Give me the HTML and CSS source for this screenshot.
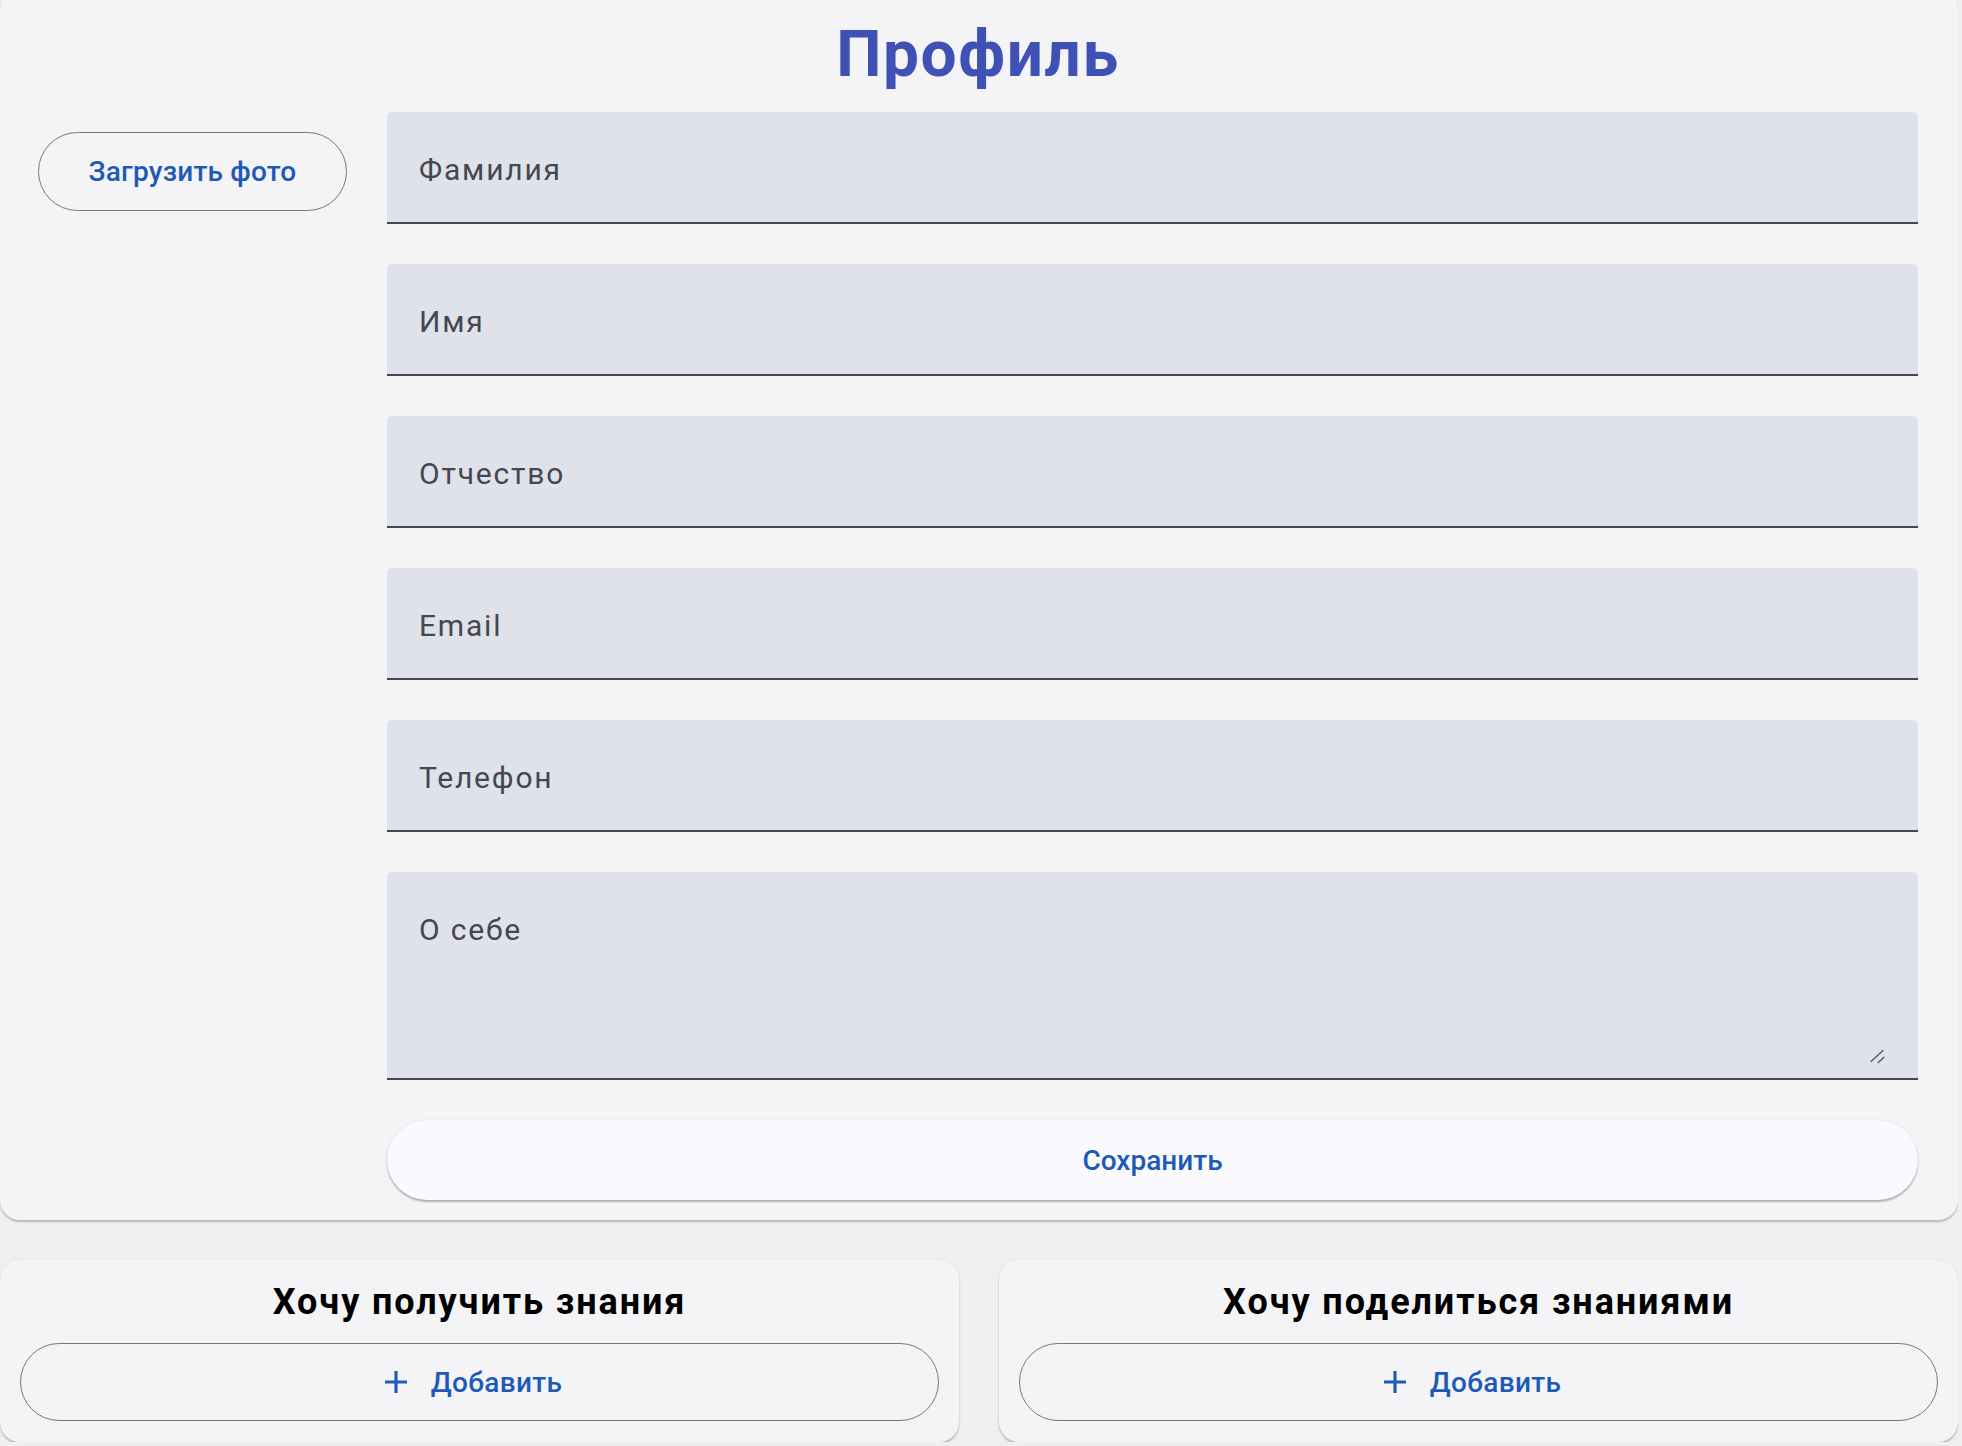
FILE: index.html
```html
<!DOCTYPE html>
<html lang="ru">
<head>
<meta charset="utf-8">
<title>Профиль</title>
<link rel="stylesheet" href="styles.css">
</head>
<body>
<div class="page">
  <section class="profile-card">
    <h1 class="title">Профиль</h1>
    <div class="profile-body">
      <div class="photo-col">
        <button class="btn-outline photo-btn" type="button">Загрузить фото</button>
      </div>
      <form class="fields">
        <div class="field"><span class="field-label">Фамилия</span></div>
        <div class="field"><span class="field-label">Имя</span></div>
        <div class="field"><span class="field-label">Отчество</span></div>
        <div class="field"><span class="field-label">Email</span></div>
        <div class="field"><span class="field-label">Телефон</span></div>
        <div class="field field-area">
          <span class="field-label">О себе</span>
          <svg class="grip" width="20" height="20" viewBox="0 0 20 20"><path d="M2.7 14.7 15.3 3.3M9.7 16 16.3 10" stroke="#55575d" stroke-width="1.4" fill="none"/></svg>
        </div>
        <button class="btn-save" type="button">Сохранить</button>
      </form>
    </div>
  </section>
  <div class="knowledge">
    <section class="k-card">
      <h2 class="k-title">Хочу получить знания</h2>
      <button class="btn-outline btn-add" type="button"><svg class="plus" width="22" height="22" viewBox="5 5 14 14"><path d="M19 13h-6v6h-2v-6H5v-2h6V5h2v6h6v2z" fill="currentColor"/></svg><span>Добавить</span></button>
    </section>
    <section class="k-card">
      <h2 class="k-title">Хочу поделиться знаниями</h2>
      <button class="btn-outline btn-add" type="button"><svg class="plus" width="22" height="22" viewBox="5 5 14 14"><path d="M19 13h-6v6h-2v-6H5v-2h6V5h2v6h6v2z" fill="currentColor"/></svg><span>Добавить</span></button>
    </section>
  </div>
</div>
</body>
</html>
```

FILE: styles.css
```css
* { box-sizing: border-box; }
html, body {
  margin: 0;
  padding: 0;
  background: #efefef;
  font-family: Roboto, "Noto Sans", sans-serif;
}
.page {
  width: 1958px;
  overflow: hidden;
}
.profile-card {
  margin-top: -10px;
  background: #f4f4f6;
  border-radius: 20px;
  padding: 27px 40px 20px 38px;
  box-shadow: 0 2px 2px rgba(0,0,0,0.22), 0 0 3px rgba(0,0,0,0.06);
}
.title {
  margin: 0;
  text-align: center;
  font-size: 64px;
  line-height: 75px;
  font-weight: 700;
  letter-spacing: 1.6px;
  color: #3f51b5;
}
.profile-body {
  display: grid;
  grid-template-columns: 309px 1fr;
  column-gap: 40px;
  padding-top: 20px;
}
.photo-col { padding-top: 20px; }
.btn-outline {
  background: transparent;
  border: 1.5px solid #76787f;
  border-radius: 40px;
  font-family: Roboto, sans-serif;
  font-weight: 500;
  color: #1d5ab8;
  cursor: pointer;
}
.photo-btn {
  width: 309px;
  height: 79px;
  font-size: 28px;
  letter-spacing: 0.2px;
  padding: 0;
}
.fields {
  display: flex;
  flex-direction: column;
  gap: 40px;
  margin: 0;
}
.field {
  position: relative;
  height: 112px;
  background: #e0e2eb;
  border-bottom: 2px solid #45474e;
  border-radius: 5px 5px 0 0;
  padding: 40px 0 0 32px;
}
.field-label {
  display: block;
  font-size: 30px;
  line-height: 35px;
  letter-spacing: 1.8px;
  color: #45474e;
}
.field-area { height: 208px; }
.grip {
  position: absolute;
  right: 30px;
  bottom: 11px;
}
.btn-save {
  height: 80px;
  border: none;
  border-radius: 40px;
  background: #f9f9fe;
  box-shadow: 0 2px 2px rgba(0,0,0,0.28), 0 0 3px rgba(0,0,0,0.06);
  font-family: Roboto, sans-serif;
  font-size: 28px;
  font-weight: 500;
  color: #1d5ab8;
  cursor: pointer;
}
.knowledge {
  display: grid;
  grid-template-columns: 1fr 1fr;
  gap: 40px;
  margin-top: 40px;
}
.k-card {
  background: #f4f4f6;
  border-radius: 20px;
  padding: 21px 20px 21px;
  box-shadow: 0 2px 2px rgba(0,0,0,0.22), 0 0 3px rgba(0,0,0,0.06);
  display: flex;
  flex-direction: column;
}
.k-title {
  margin: 0 0 20px;
  text-align: center;
  font-size: 36px;
  line-height: 42px;
  font-weight: 700;
  letter-spacing: 1.9px;
  color: #000;
}
.btn-add {
  height: 78px;
  width: 100%;
  display: flex;
  align-items: center;
  justify-content: center;
  gap: 24px;
  padding: 0 12px 0 0;
  font-size: 28px;
  letter-spacing: 0.3px;
}
.plus { display: block; }
```
